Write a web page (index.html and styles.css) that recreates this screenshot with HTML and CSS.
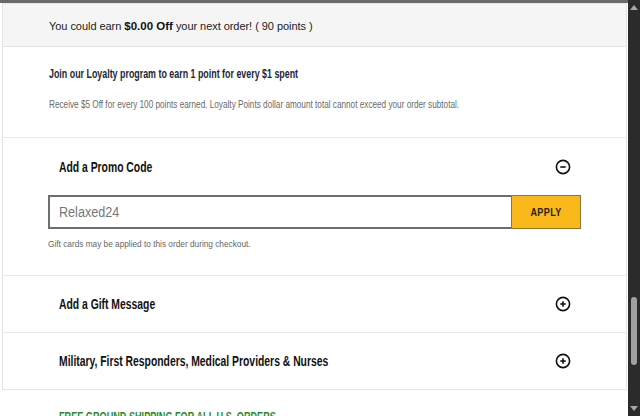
FILE: index.html
```html
<!DOCTYPE html>
<html>
<head>
<meta charset="utf-8">
<link rel="stylesheet" href="styles.css">
</head>
<body>
<div class="page">
  <div class="main">
    <div class="card">
      <div class="earn">You could earn <b>$0.00 Off</b> your next order! ( 90 points )</div>
      <div class="loyalty">
        <div class="line"><span class="join">Join our Loyalty program to earn 1 point for every $1 spent</span></div>
        <div class="line receive-row"><span class="receive">Receive $5 Off for every 100 points earned. Loyalty Points dollar amount total cannot exceed your order subtotal.</span></div>
      </div>
      <div class="section promo">
        <div class="head">
          <span class="title">Add a Promo Code</span>
          <svg class="icon" width="16" height="16" viewBox="0 0 16 16"><circle cx="8" cy="8" r="6.6" fill="none" stroke="#111" stroke-width="1.6"/><line x1="5.3" y1="8" x2="10.7" y2="8" stroke="#111" stroke-width="1.6"/></svg>
        </div>
        <div class="promo-row">
          <div class="input"><span class="code">Relaxed24</span></div>
          <div class="apply"><span class="apply-text">APPLY</span></div>
        </div>
        <div class="line note-row"><span class="note">Gift cards may be applied to this order during checkout.</span></div>
      </div>
      <div class="section row">
        <span class="title">Add a Gift Message</span>
        <svg class="icon" width="16" height="16" viewBox="0 0 16 16"><circle cx="8" cy="8" r="6.6" fill="none" stroke="#111" stroke-width="1.6"/><line x1="5.3" y1="8" x2="10.7" y2="8" stroke="#111" stroke-width="1.6"/><line x1="8" y1="5.3" x2="8" y2="10.7" stroke="#111" stroke-width="1.6"/></svg>
      </div>
      <div class="section row last">
        <span class="title">Military, First Responders, Medical Providers &amp; Nurses</span>
        <svg class="icon" width="16" height="16" viewBox="0 0 16 16"><circle cx="8" cy="8" r="6.6" fill="none" stroke="#111" stroke-width="1.6"/><line x1="5.3" y1="8" x2="10.7" y2="8" stroke="#111" stroke-width="1.6"/><line x1="8" y1="5.3" x2="8" y2="10.7" stroke="#111" stroke-width="1.6"/></svg>
      </div>
    </div>
    <div class="line shipping-row"><span class="shipping">FREE GROUND SHIPPING FOR ALL U.S. ORDERS</span></div>
  </div>
  <div class="scrollbar">
    <div class="arrow up"></div>
    <div class="track"><div class="thumb"></div></div>
    <div class="arrow down"></div>
  </div>
</div>
</body>
</html>
```
FILE: styles.css
```css
html, body {
  margin: 0;
  padding: 0;
  background: #fff;
  overflow: hidden;
}
.page {
  display: flex;
  width: 640px;
  height: 416px;
  overflow: hidden;
}
.main {
  flex: 1;
  border-top: 3px solid #6a6a6a;
  padding-left: 2px;
  padding-right: 1px;
  overflow: hidden;
}
.card {
  border: 1px solid #e3e3e3;
  border-top: none;
}
.earn {
  background: #f5f5f5;
  border-top: 1px solid #e6e6e6;
  border-bottom: 1px solid #e3e3e3;
  height: 42px;
  line-height: 44px;
  padding-left: 46px;
  font-family: "Liberation Sans", Arial, sans-serif;
  font-size: 11px;
  letter-spacing: -0.05px;
  color: #222;
}
.earn b {
  font-size: 11.5px;
  letter-spacing: 0;
  color: #111;
}
.loyalty, .section, .shipping-row {
  font-family: "Liberation Sans", Arial, sans-serif;
}
.line {
  display: flex;
  align-items: center;
}
.join, .receive, .title, .code, .apply-text, .note, .shipping {
  display: inline-block;
  white-space: nowrap;
  transform-origin: left center;
}
.loyalty {
  padding: 20px 0 0 46px;
  height: 70px;
  border-bottom: 1px solid #e8e8e8;
}
.join {
  font-size: 12.5px;
  font-weight: bold;
  color: #1c2635;
  line-height: 14px;
  transform: scaleX(0.71);
}
.receive-row {
  margin-top: 18px;
}
.receive {
  font-size: 10px;
  line-height: 12px;
  color: #6a6a6a;
  transform: scaleX(0.82);
}
.section {
  border-bottom: 1px solid #e8e8e8;
}
.title {
  font-size: 14px;
  font-weight: bold;
  color: #111;
  transform: scaleX(0.74);
}
.head, .row {
  display: flex;
  align-items: center;
  justify-content: space-between;
  padding-left: 56px;
  padding-right: 55px;
}
.promo {
  height: 137px;
}
.promo .head {
  height: 57px;
}
.row {
  height: 56px;
}
.row.last {
  border-bottom: none;
}
.promo-row {
  display: flex;
  margin-left: 45px;
  width: 533px;
  height: 34px;
}
.input {
  flex: 1;
  border: 2px solid #6e6e6e;
  border-right: none;
  display: flex;
  align-items: center;
  padding-left: 9px;
}
.code {
  font-size: 14px;
  color: #777;
  transform: scaleX(0.9);
}
.apply {
  width: 68px;
  background: #fbb81b;
  border: 1px solid #8a7640;
  display: flex;
  align-items: center;
  justify-content: center;
}
.apply-text {
  font-size: 11px;
  font-weight: bold;
  letter-spacing: 0.5px;
  color: #2a2210;
  transform: scaleX(0.82);
  transform-origin: center;
}
.note-row {
  margin: 9px 0 0 45px;
}
.note {
  font-size: 9.5px;
  line-height: 11px;
  color: #666;
  transform: scaleX(0.87);
}
.shipping-row {
  padding: 20px 0 0 57px;
}
.shipping {
  font-size: 12px;
  line-height: 14px;
  font-weight: bold;
  color: #2a8a2a;
  transform: scaleX(0.76);
}
.scrollbar {
  width: 12px;
  background: #2b2b2b;
  display: flex;
  flex-direction: column;
  align-items: center;
}
.arrow {
  width: 0;
  height: 0;
  border-left: 4px solid transparent;
  border-right: 4px solid transparent;
  margin: 5px 0;
}
.arrow.up {
  border-bottom: 5px solid #a5a5a5;
}
.arrow.down {
  border-top: 5px solid #a5a5a5;
}
.track {
  flex: 1;
  width: 100%;
  display: flex;
  flex-direction: column;
  align-items: center;
}
.thumb {
  margin-top: 282px;
  width: 6px;
  height: 68px;
  border-radius: 3px;
  background: #a0a0a0;
}
```
